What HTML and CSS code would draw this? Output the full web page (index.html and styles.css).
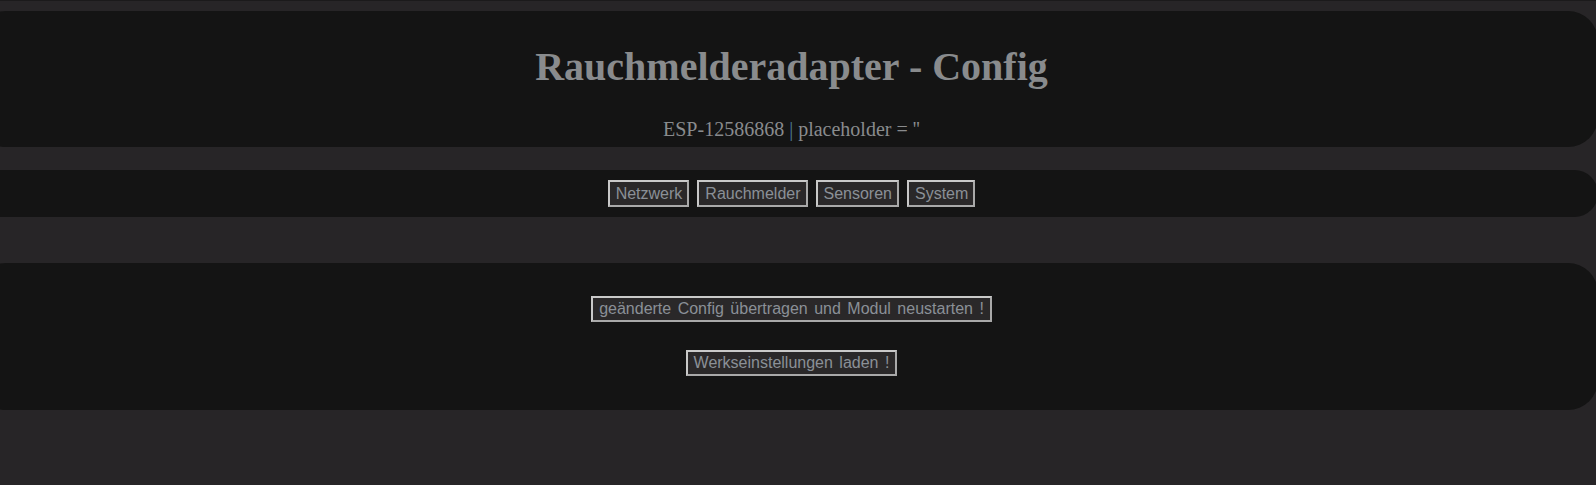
FILE: index.html
```html
<!DOCTYPE html>
<html lang="de">
<head>
<meta charset="utf-8">
<title>Rauchmelderadapter - Config</title>
<link rel="stylesheet" href="styles.css">
</head>
<body>
<header class="panel head">
  <h1 class="title">Rauchmelderadapter - Config</h1>
  <p class="sub">ESP-12586868 <span class="sep">|</span> placeholder = ''</p>
</header>
<nav class="panel nav">
  <button class="btn">Netzwerk</button>
  <button class="btn">Rauchmelder</button>
  <button class="btn">Sensoren</button>
  <button class="btn">System</button>
</nav>
<main class="panel actions">
  <button class="btn">geänderte Config übertragen und Modul neustarten !</button>
  <button class="btn">Werkseinstellungen laden !</button>
</main>
</body>
</html>
```

FILE: styles.css
```css
html {
  background: #272527;
  overflow-x: hidden;
}
body {
  margin: 0;
  border-top: 1px solid #1b1a1b;
  padding-top: 10px;
  font-family: "Liberation Serif", "Times New Roman", serif;
  color: #898b8d;
}
.panel {
  background: #141414;
  border-radius: 30px;
  margin: 0 -2px 0 -24px;
  padding-left: 9px;
  text-align: center;
}
.head {
  padding-top: 33px;
  padding-bottom: 6px;
}
.title {
  margin: 0;
  font-size: 40px;
  line-height: 46px;
  font-weight: bold;
}
.sub {
  margin: 28px 0 0;
  font-size: 20px;
  line-height: 23px;
}
.sep {
  color: #4f7e9b;
}
.nav {
  margin-top: 23px;
  padding-top: 10px;
  padding-bottom: 10px;
  display: flex;
  justify-content: center;
  gap: 8px;
}
.btn {
  font-family: "Liberation Sans", Arial, sans-serif;
  font-size: 16px;
  line-height: 19px;
  word-spacing: 2px;
  padding: 2px 5px 2px 6px;
  color: #8a9097;
  background: #2a2829;
  border: 2px solid #c9c9c9;
  border-right-color: #a9a9a9;
  border-bottom-color: #a9a9a9;
  border-radius: 0;
  margin: 0;
}
.actions {
  margin-top: 46px;
  padding-top: 33px;
  padding-bottom: 34px;
  display: flex;
  flex-direction: column;
  align-items: center;
  gap: 28px;
}
.actions .btn {
  line-height: 18px;
  padding: 2px 6px;
}
```
